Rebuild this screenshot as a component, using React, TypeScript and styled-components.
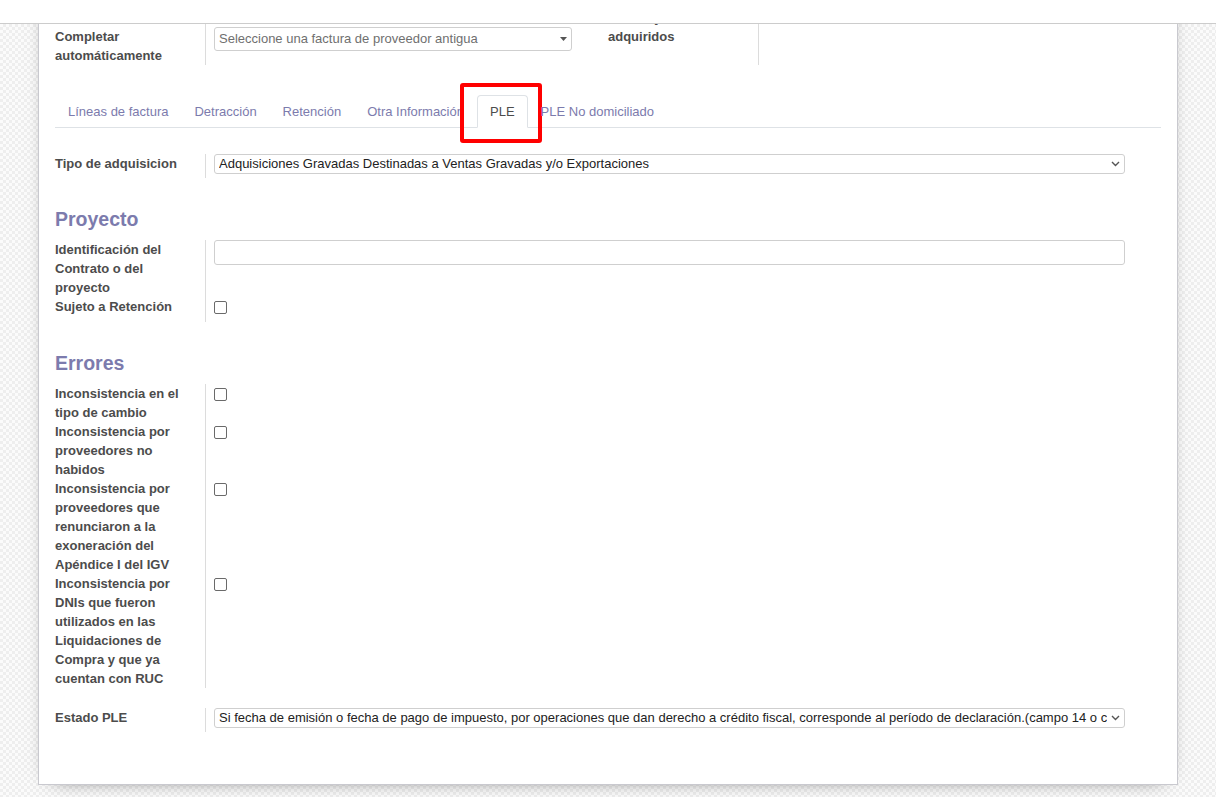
import React from "react";
import styled, { createGlobalStyle } from "styled-components";

const GlobalStyle = createGlobalStyle`
  html, body { margin: 0; padding: 0; }
  body {
    font-family: "Liberation Sans", Arial, sans-serif;
    font-size: 13px;
    line-height: 19px;
    color: #4c4c4c;
    background: #ffffff;
  }
  * { box-sizing: border-box; }
`;

const Page = styled.div`
  height: 100vh;
  display: flex;
  flex-direction: column;
  overflow: hidden;
`;

const TopBar = styled.div`
  flex: none;
  height: 24px;
  background: #ffffff;
  border-bottom: 1px solid #cccccc;
`;

const Viewport = styled.div`
  flex: 1;
  min-height: 0;
  overflow: hidden;
  background-color: #f6f6f6;
  background-image: repeating-conic-gradient(#eeeeee 0 25%, #fbfbfb 0 50%);
  background-size: 6px 6px;
`;

const Sheet = styled.div`
  width: 1140px;
  margin: -52px auto 0;
  background: #ffffff;
  border: 1px solid #c9c9cf;
  box-shadow: 0 5px 20px -15px #000000;
  padding: 16px 16px 52px;
`;

const Columns = styled.div`
  display: grid;
  grid-template-columns: minmax(0, 1fr) minmax(0, 1fr);
`;

const Group = styled.div<{ $mt?: number }>`
  display: grid;
  grid-template-columns: 151px minmax(0, 1fr);
  margin-top: ${(p) => p.$mt ?? 0}px;
`;

const Label = styled.div`
  font-weight: bold;
  color: #4c4c4c;
  padding-right: 10px;
  border-right: 1px solid #dcdcdc;
`;

const Field = styled.div`
  min-width: 0;
  padding: 0 36px 0 8px;
  min-height: 24px;
`;

const CheckField = styled.div`
  padding: 4px 36px 0 8px;
  min-height: 25px;
`;

const Checkbox = styled.span`
  display: block;
  width: 13px;
  height: 13px;
  border: 1px solid #6a6a6a;
  border-radius: 2px;
  background: #ffffff;
`;

const SelectBox = styled.div<{ $height: number; $muted?: boolean }>`
  display: flex;
  align-items: center;
  width: 100%;
  height: ${(p) => p.$height}px;
  border: 1px solid #cfcfcf;
  border-radius: 3px;
  padding: 0 4px;
  background: #ffffff;
  color: ${(p) => (p.$muted ? "#6f6f6f" : "#222222")};
  line-height: 18px;
  overflow: hidden;
`;

const SelectText = styled.span`
  flex: 1;
  min-width: 0;
  overflow: hidden;
  white-space: nowrap;
`;

const TextInput = styled.div`
  height: 25px;
  border: 1px solid #cfcfcf;
  border-radius: 3px;
  background: #ffffff;
`;

const TabNav = styled.div`
  display: flex;
  margin-top: 30px;
  border-bottom: 1px solid #dee2e6;
`;

const Tab = styled.div<{ $active?: boolean }>`
  position: relative;
  padding: 6px 12px;
  margin-bottom: -1px;
  border: 1px solid transparent;
  border-radius: 4px 4px 0 0;
  white-space: nowrap;
  color: ${(p) => (p.$active ? "#4c4c4c" : "#7c7bad")};
  background: ${(p) => (p.$active ? "#ffffff" : "transparent")};
  border-color: ${(p) =>
    p.$active ? "#dee2e6 #dee2e6 #ffffff" : "transparent"};
`;

const Highlight = styled.span`
  position: absolute;
  left: -18px;
  top: -13px;
  width: 82px;
  height: 60px;
  border: 4px solid #ff0000;
  border-radius: 3px;
  pointer-events: none;
`;

const TabContent = styled.div`
  padding-top: 26px;
`;

const SectionTitle = styled.div`
  font-size: 19.5px;
  line-height: 23px;
  font-weight: bold;
  color: #7c7bad;
  margin: 30px 0 9px;
`;

const Chevron = () => (
  <svg width="9" height="6" viewBox="0 0 9 6" style={{ flex: "none", marginLeft: 4 }}>
    <path d="M1 1 L4.5 4.5 L8 1" fill="none" stroke="#555" strokeWidth="1.4" />
  </svg>
);

const Caret = () => (
  <svg width="7" height="4" viewBox="0 0 7 4" style={{ flex: "none", marginLeft: 4 }}>
    <polygon points="0,0 7,0 3.5,4" fill="#555" />
  </svg>
);

const tabs = [
  "Líneas de factura",
  "Detracción",
  "Retención",
  "Otra Información",
  "PLE",
  "PLE No domiciliado",
];

const errores: string[] = [
  "Inconsistencia en el tipo de cambio",
  "Inconsistencia por proveedores no habidos",
  "Inconsistencia por proveedores que renunciaron a la exoneración del Apéndice I del IGV",
  "Inconsistencia por DNIs que fueron utilizados en las Liquidaciones de Compra y que ya cuentan con RUC",
];

export default function App() {
  return (
    <>
      <GlobalStyle />
      <Page>
        <TopBar />
        <Viewport>
          <Sheet>
            <Columns>
              <Group>
                <Label>Documento de referencia</Label>
                <Field>
                  <TextInput />
                </Field>
                <Label>Completar automáticamente</Label>
                <Field>
                  <SelectBox $height={24} $muted>
                    <SelectText>Seleccione una factura de proveedor antigua</SelectText>
                    <Caret />
                  </SelectBox>
                </Field>
              </Group>
              <Group>
                <Label>Clasificación de Bienes y Servicios adquiridos</Label>
                <Field>
                  <SelectBox $height={24}>
                    <SelectText />
                    <Chevron />
                  </SelectBox>
                </Field>
              </Group>
            </Columns>

            <TabNav>
              {tabs.map((t) => (
                <Tab key={t} $active={t === "PLE"}>
                  {t}
                  {t === "PLE" && <Highlight />}
                </Tab>
              ))}
            </TabNav>

            <TabContent>
              <Group>
                <Label>Tipo de adquisicion</Label>
                <Field>
                  <SelectBox $height={20}>
                    <SelectText>
                      Adquisiciones Gravadas Destinadas a Ventas Gravadas y/o Exportaciones
                    </SelectText>
                    <Chevron />
                  </SelectBox>
                </Field>
              </Group>

              <SectionTitle>Proyecto</SectionTitle>
              <Group>
                <Label>Identificación del Contrato o del proyecto</Label>
                <Field>
                  <TextInput />
                </Field>
                <Label>Sujeto a Retención</Label>
                <CheckField>
                  <Checkbox />
                </CheckField>
              </Group>

              <SectionTitle>Errores</SectionTitle>
              <Group>
                {errores.map((e) => (
                  <React.Fragment key={e}>
                    <Label>{e}</Label>
                    <CheckField>
                      <Checkbox />
                    </CheckField>
                  </React.Fragment>
                ))}
              </Group>

              <Group $mt={20}>
                <Label>Estado PLE</Label>
                <Field>
                  <SelectBox $height={20}>
                    <SelectText>
                      Si fecha de emisión o fecha de pago de impuesto, por operaciones que dan derecho a crédito fiscal, corresponde al período de declaración.(campo 14 o campo 15)
                    </SelectText>
                    <Chevron />
                  </SelectBox>
                </Field>
              </Group>
            </TabContent>
          </Sheet>
        </Viewport>
      </Page>
    </>
  );
}
